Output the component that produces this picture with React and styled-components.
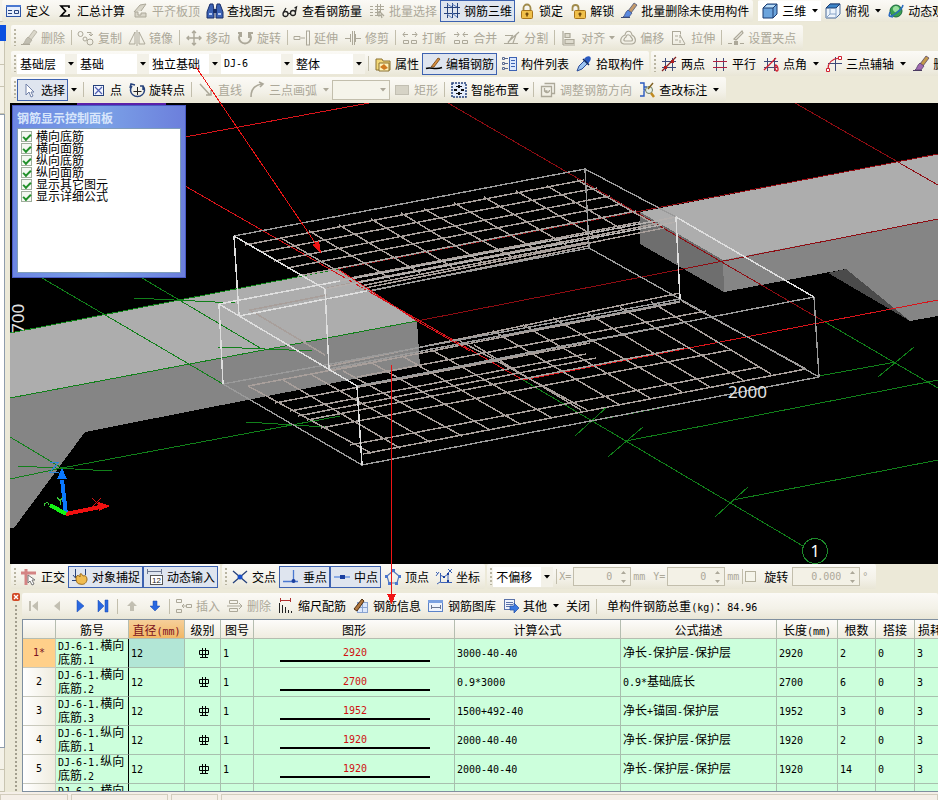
import React from "react";
import styled, { createGlobalStyle, css } from "styled-components";

const CJK = '"Noto Sans CJK SC", "Liberation Sans", sans-serif';
const MONO = '"DejaVu Sans Mono", "Liberation Mono", monospace';

const Global = createGlobalStyle`
  * { box-sizing: border-box; }
  body { margin: 0; background: #ece9d8; font: 12px/16px ${CJK}; color: #000; overflow: hidden; }
  button, input, select { font: inherit; color: inherit; margin: 0; }
`;

/* ---------- layout ---------- */
const Shell = styled.div`
  position: relative;
  display: flex;
  flex-direction: column;
  height: 100vh;
  overflow: hidden;
  background: #ece9d8;
`;
const Body = styled.div`
  flex: 1;
  display: flex;
  min-height: 0;
`;
const Side = styled.aside`
  flex: none;
  width: 10px;
  display: flex;
  flex-direction: column;
  padding-right: 4px;
`;
const SideTitle = styled.div`
  height: 16px;
  margin-top: 3px;
  background: #0b50e0;
`;
const SideTab = styled.div`
  height: ${(p) => p.$h}px;
  margin-right: 1px;
  border: solid #c9c5b2;
  border-width: 0 1px 1px 0;
  background: #f4f2e8;
`;
const SideList = styled.div`
  flex: 1;
  margin-right: 1px;
  border: solid #8f9dac;
  border-width: 1px 1px 1px 0;
  background: #fff;
`;
const Main = styled.main`
  flex: 1;
  min-width: 0;
  display: flex;
  flex-direction: column;
`;
const BarRow = styled.div`
  flex: none;
  display: flex;
  gap: 2px;
  height: 26px;
  padding-left: 1px;
  overflow: hidden;
`;
const TopRow = styled(BarRow)`
  height: 25px;
  margin-left: -10px;
  padding: 0 0 3px 3px;
  gap: 6px;
`;
const Bar = styled.div`
  flex: none;
  display: flex;
  align-items: center;
  height: 25px;
  padding-right: ${(p) => p.$end || 2}px;
  background: linear-gradient(#fbfaf6, #f3f1e8 60%, #e9e6d6);
  border-radius: 2px;
`;
const TopBar = styled(Bar)`
  height: 22px;
  margin-left: -1px;
`;
const Grip = styled.span`
  flex: none;
  width: 2px;
  height: 17px;
  margin: 0 1px 0 3px;
  background: repeating-linear-gradient(#b9b5a2 0 2px, transparent 2px 4px);
`;
const Divider = styled.span`
  flex: none;
  width: 1px;
  height: 15px;
  margin: 0 2px 0 3px;
  background: #c2beac;
`;
const Tool = styled.button`
  flex: none;
  display: flex;
  align-items: center;
  gap: 4px;
  height: 22px;
  padding: 0 2px 0 3px;
  border: 1px solid transparent;
  background: none;
  white-space: nowrap;
  line-height: 18px;
  &:disabled { color: #aca899; }
  ${(p) => p.$on && css`
    border-color: #3d62b0;
    background: #dfe5ef;
  `}
`;
const Drop = styled.span`
  flex: none;
  width: ${(p) => (p.$tight ? 8 : 12)}px;
  display: flex;
  justify-content: center;
  color: ${(p) => (p.$off ? "#aca899" : "#000")};
  svg { width: 6px; height: 4px; }
`;
const NavTool = styled.button`
  flex: none;
  width: 23px;
  height: 22px;
  padding: 0;
  border: 0;
  background: none;
  display: flex;
  align-items: center;
  justify-content: center;
`;
const ComboBox = styled.label`
  flex: none;
  display: grid;
  align-items: center;
  width: ${(p) => p.$w}px;
  height: 20px;
  border: ${(p) => (p.$frame ? "1px solid #c2beac" : "0")};
  background: ${(p) => (p.$frame ? "#f5f4ea" : "#fff")};
  color: ${(p) => (p.$frame ? "#aca899" : "#000")};
  > * { grid-area: 1 / 1; }
`;
const Select = styled.select`
  width: 100%;
  height: 18px;
  padding: 0 0 0 3px;
  border: 0;
  background: none;
  appearance: none;
  line-height: 16px;
  outline: 0;
  ${(p) => p.$latin && css`font: 10px/16px ${MONO};`}
`;
const ComboArrow = styled.span`
  justify-self: end;
  display: flex;
  align-items: center;
  justify-content: center;
  width: 12px;
  height: 100%;
  background: ${(p) => (p.$plain ? "none" : "#f3f1e8")};
  pointer-events: none;
  svg { width: 6px; height: 4px; }
`;
const ViewCombo = styled.div`
  flex: none;
  display: flex;
  align-items: center;
  height: 20px;
  background: #fff;
`;
const Latin = styled.span`
  font: 10px/12px ${MONO};
`;
const Field = styled.label`
  flex: none;
  display: flex;
  align-items: center;
  gap: ${(p) => p.$gap || 2}px;
  margin-left: ${(p) => p.$ml || 0}px;
  color: ${(p) => (p.$dark ? "#000" : "#aca899")};
  font: ${(p) => (p.$dark ? "12px/16px " + CJK : "10px/16px " + MONO)};
`;
const Spin = styled.span`
  display: flex;
  align-items: center;
  width: ${(p) => p.$w}px;
  height: 19px;
  padding-right: 3px;
  border: 1px solid #c2beac;
  background: #f3f1e6;
  svg { flex: none; width: 7px; height: 14px; }
`;
const SpinInput = styled.input`
  flex: 1;
  min-width: 0;
  width: 100%;
  padding: 0 8px 0 0;
  border: 0;
  background: none;
  text-align: right;
  font: 10px/14px ${MONO};
  color: #aca899;
`;
const Check = styled.input`
  appearance: none;
  flex: none;
  width: 11px;
  height: 11px;
  border: 1px solid #b5b19e;
  background: #f5f4ea;
`;

/* ---------- scene ---------- */
const Stage = styled.section`
  position: relative;
  flex: 1;
  min-height: 0;
  background: #000;
  overflow: hidden;
`;
const SceneSvg = styled.svg`
  display: block;
  width: 100%;
  height: 100%;
`;
const Palette = styled.div`
  position: absolute;
  left: 2px;
  top: 2px;
  width: 174px;
  height: 173px;
  display: flex;
  flex-direction: column;
  padding: 0 4px 4px;
  border: 1px solid #4a5ac4;
  background: linear-gradient(90deg, #6c86e2, #7ba2e7 50%, #6c7fdc);
`;
const PaletteTitle = styled.h2`
  flex: none;
  height: 22px;
  margin: 0;
  padding-top: 2px;
  font: bold 12px/20px ${CJK};
  color: #d8e6fb;
  white-space: nowrap;
`;
const PaletteList = styled.div`
  flex: 1;
  padding: 1px 3px;
  border: 1px solid #7f9db9;
  background: #fff;
`;
const CheckRow = styled.label`
  display: flex;
  align-items: center;
  gap: 4px;
  height: 12px;
  line-height: 12px;
  white-space: nowrap;
`;
const Tick = styled.input`
  appearance: none;
  width: 11px;
  height: 11px;
  border: 1px solid #9fae9c;
  background: #f4f8f2;
  display: grid;
  place-items: center;
  &:checked::before {
    content: "";
    width: 6px;
    height: 3px;
    border: solid #21902a;
    border-width: 0 0 2px 2px;
    transform: rotate(-45deg);
  }
`;
const Callouts = styled.svg`
  position: absolute;
  left: 0;
  top: 0;
  width: 938px;
  height: 800px;
  pointer-events: none;
`;

/* ---------- editor ---------- */
const Editor = styled.section`
  flex: none;
  display: flex;
  height: 202px;
  padding-top: 3px;
`;
const EditorEdge = styled.div`
  flex: none;
  width: 12px;
  display: flex;
  flex-direction: column;
  align-items: center;
  gap: 4px;
`;
const CloseBox = styled.button`
  width: 8px;
  height: 8px;
  padding: 0;
  border: 0;
  border-radius: 2px;
  background: #d24a26;
  color: #fff;
  display: flex;
  svg { width: 8px; height: 8px; }
`;
const EdgeDots = styled.span`
  flex: 1;
  width: 2px;
  background: repeating-linear-gradient(#a39f8e 0 2px, transparent 2px 4px);
`;
const EditorMain = styled.div`
  flex: 1;
  min-width: 0;
  display: flex;
  flex-direction: column;
`;
const EditBar = styled(Bar)`
  flex: none;
  height: 26px;
`;
const Total = styled.output`
  margin-left: 8px;
  white-space: nowrap;
`;
const GridBox = styled.div`
  flex: 1;
  min-height: 0;
  overflow: hidden;
  border: solid #7f8f9f;
  border-width: 1px 0 1px 1px;
  background: #fff;
`;
const Grid = styled.table`
  width: 100%;
  min-width: 950px;
  table-layout: fixed;
  border-collapse: separate;
  border-spacing: 0;
`;
const Th = styled.th`
  height: 19px;
  padding: 0;
  border: solid #b5bdb0;
  border-width: 0 1px 1px 0;
  background: ${(p) => (p.$hot ? "linear-gradient(#f6cf9a, #f2b866)" : "linear-gradient(#fdfcfa, #efecdf)")};
  color: ${(p) => (p.$hot ? "#7a1020" : "#000")};
  font-weight: 400;
  line-height: 17px;
  text-align: ${(p) => (p.$left ? "left" : "center")};
  ${(p) => p.$left && css`padding-left: 3px;`}
  white-space: nowrap;
  overflow: hidden;
`;
const Td = styled.td`
  height: 29px;
  padding: 0 0 0 2px;
  border: solid #a8bfae;
  border-width: 0 1px 1px 0;
  background: ${(p) => (p.$hot ? "#b2e6d6" : "#ccffdc")};
  line-height: 12px;
  text-align: ${(p) => (p.$mid ? "center" : "left")};
  overflow: hidden;
  ${(p) => p.$edge && css`border-right-color: #000;`}
  ${(p) => !p.$wrap && css`white-space: nowrap;`}
`;
const RowHead = styled.th`
  padding: 0;
  border: solid #c9c9bd;
  border-width: 0 1px 1px 0;
  background: ${(p) => (p.$hot ? "#ffd08a" : "linear-gradient(90deg, #fff, #efecdf)")};
  color: ${(p) => (p.$hot ? "#7a1020" : "#000")};
  font: 10px/12px ${MONO};
  text-align: center;
`;
const Shape = styled.div`
  width: 150px;
  margin: 0 auto;
  padding-bottom: 1px;
  border-bottom: 2px solid #000;
  color: #d01010;
  text-align: center;
`;
const Status = styled.footer`
  flex: none;
  display: flex;
  gap: 3px;
  height: 8px;
  padding-top: 2px;
  background: #f5efe8;
`;
const StatusCell = styled.span`
  width: ${(p) => p.$w}px;
  border: 1px solid #d3cdbd;
  border-bottom: 0;
  &:last-child { flex: 1; }
`;

/* ---------- icons ---------- */
const IconSvg = styled.svg`
  flex: none;
  width: 16px;
  height: 16px;
  overflow: visible;
`;
const G = "#aca899";
const N = "#26427c";
const L = (d, c = G, w = 1, f = "none") => <path d={d} stroke={c} strokeWidth={w} fill={f} />;
const brush = (c1, c2, c3) => (
  <>
    <path d="M7 8 13 0l3 2-6 8z" fill={c2} stroke={c3} strokeWidth=".7" />
    <path d="M7 7l4 3-3 4H2c2-1 2-5 5-7z" fill={c1} stroke={c3} strokeWidth=".7" />
    <path d="M0 14.500h9" stroke={c3} />
  </>
);
const lock = (open) => (
  <>
    <path d={open ? "M2.500 8V5a3 3 0 0 1 6 0v2" : "M4.500 8V5a3.500 3.500 0 0 1 7 0v3"} fill="none" stroke="#a08a4a" strokeWidth="1.800" />
    <rect x={open ? 4.5 : 2.5} y="7.500" width="11" height="8" rx="1" fill="#f0c04a" stroke="#a8741a" />
    <path d={open ? "M10 9.500v4M8.500 11h3" : "M8 9.500v4M6.500 11h3"} stroke="#6b4308" strokeWidth="1.500" />
  </>
);
const hash = L("M4.500 2v13M11.500 2v13M1 5.500h14M1 11.500h14", "#3d4a78");
const ICONS = {
  define: <><rect x=".5" y="2.500" width="14" height="11" fill="#e6eefc" stroke="#2d55a8" /><path d="M0 2h15v2H0z" fill="#4a78d0" />{L("M2 7.500h4M2 10.500h4M8.500 7.500h4v3h-4z", N)}</>,
  sum: L("M12 5V3H4l4.500 5L4 13h8v-2", "#000", 1.7),
  flat: <>{L("M2 9 8 2l6-1-5 7M3 9v5h11v-4H9v2H6V9z", G, 1, "#d8d5c8")}</>,
  find: <><path d="M3 1h3l1 6v8H0V9zM10 1h3l3 8v6H9V7z" fill="#3c62b4" stroke="#1a2f68" /><path d="M6 6h4v4H6z" fill="#1a2f68" /><path d="M2 11h3M11 11h3" stroke="#b8ccf4" strokeWidth="2" /></>,
  glasses: <>{L("M1 11a2.500 2.500 0 1 0 5 0 2.500 2.500 0 1 0-5 0M8.500 10a2.500 2.500 0 1 0 5 0 2.500 2.500 0 1 0-5 0M6 11l2.500-1M1 10l3-5M13.500 9l1-5-2 1", "#222", 1.3)}</>,
  batch: <>{L("M1 3.500h3M1 6.500h3M1 9.500h3M1 12.500h3M6 3.500h9M6 6.500h9M6 9.500h6M6 12.500h4M8.500 1v12M11.500 1v9")}{L("M10 8l5 5M10 8v5l2-1 1 3", G, 1.3)}</>,
  mesh: <>{L("M0 4.500h16M0 10.500h16M3.500 0v15M8.500 0v15M13.500 0v15", N)}{L("M3 1l5 3M8 10l5 4M3 11l5 4M8 1l5 3", "#5a7ec0")}</>,
  lock: lock(false),
  unlock: lock(true),
  brush: brush("#5c8ae0", "#c49a6a", "#3b4a78"),
  brushRed: brush("#a06ab0", "#c49a4a", "#4a3a60"),
  brushOff: brush("#c2bfb2", "#dad7ca", G),
  cube: <><path d="M1 5l4-4h10v10l-4 4H1z" fill="#6ca4dc" stroke="#1c3c70" /><path d="M2 5l3-3h9l-3 3z" fill="#b8dcf8" /><path d="M1 5h10v10M11 5l4-4" fill="none" stroke="#1c3c70" /></>,
  topview: <><path d="M1 5l4-4h10v10l-4 4H1z" fill="#edf4fb" stroke="#4a6a98" /><path d="M1 5l4-4h10l-4 4z" fill="#3c84c8" stroke="#1c3c70" /><path d="M11 5v10M5 5v6h6M5 11l-4 4" stroke="#88a4c8" fill="none" /></>,
  orbit: <><circle cx="8" cy="8" r="6" fill="#3aa050" stroke="#1c6a40" /><path d="M5 5c2-3 5-2 6 0s-2 3-3 4-4-2-3-4z" fill="#9ae0a0" /><path d="M1 13C4 14 14 7 15 2M1 13l1-4M1 13l4 1" stroke="#2a6ac0" fill="none" strokeWidth="1.500" /></>,
  copy: <>{L("M0 4a2.500 2.500 0 1 0 5 0 2.500 2.500 0 1 0-5 0M9 12a3 3 0 1 0 6 0 3 3 0 1 0-6 0M5 9a2 2 0 1 0 4 0 2 2 0 1 0-4 0M9 2.500h4v3M11 4l2 2 2-2")}</>,
  mirror: L("M6 2v12H0zM10 2v12h6zM8 0v16"),
  move: L("M8 1v14M1 8h14M6 3l2-2 2 2M6 13l2 2 2-2M3 6 1 8l2 2M13 6l2 2-2 2", G, 1.4),
  rotate: L("M4 3a6 6 0 1 0 8 0M12 8V3h4M4 7V3H1", G, 2),
  extend: L("M0 6.500h6v3H0zM7 8h4M12.500 1v14M15.500 1v14M12 1h4M12 15h4"),
  trim: L("M0 8.500h5M11 8.500h5M5.500 4v8M10.500 4v8M7.500 1v14M9.500 1v14"),
  break_: L("M1 4.500h5M10 4.500h5M3 2 1 4.500 3 7M13 2l2 2.500L13 7M1.500 10.500h5v3h-5zM9.500 10.500h5v3h-5z"),
  merge: L("M1 4.500h5M10 4.500h5M4 2l2 2.500L4 7M12 2l-2 2.500L12 7M1.500 10.500h5v3h-5zM9.500 10.500h5v3h-5z"),
  split: L("M1 5.500h8M0 13.500h14M4 12 15 2M9 5l-5 8M9 13l3-8", G, 1.2),
  align: L("M2 1v14M4 3.500h5v4H4zM4 9.500h9v4H4zM2 15h12", G, 1.2, "#dedbce"),
  offset: L("M5 5c1-5 6-5 7 0 4 2 5 8 0 9H4C-1 13 0 7 5 5zM6 7c0-3 4-3 5 0 2 2 2 4 0 4H5c-2 0-1-3 1-4z", G, 1.2),
  stretch: L("M1.500 1.500h8v3M1.500 1v13M1 14.500h13M4 6h3M4 10h3M9 5l5 9M9 5v3M9 10v3", G, 1),
  grips: <>{L("M0 13.500h4M12 13.500h4M6 9 14 1l1 2-7 7z", G, 1.2)}<path d="M6 11h4v4H6z" fill={G} /></>,
  prop: <><path d="M1 3h6l1 2h7v9H1z" fill="#f2d878" stroke="#8a7030" /><path d="M4 7h10v8H4z" fill="#fff3b8" stroke="#8a7030" /><path d="M5 11l4-3 4 4-4 2z" fill="#d07a20" /></>,
  editbar: <><path d="M0 12.500c5-2 9 2 16-1" stroke="#000" strokeWidth="1.500" fill="none" /><path d="M5 11 12 2l2 1-6 8z" fill="#d89040" stroke="#704010" strokeWidth=".8" /></>,
  list: <>{L("M1.500 1.500h2v2h-2zM1.500 6.500h2v2h-2zM1.500 11.500h2v2h-2zM4 2.500h3M4 7.500h3M4 12.500h3", "#5a6a90")}<rect x="8.500" y="1.500" width="7" height="13" fill="#dce8fc" stroke="#3c62b4" />{L("M10 4.500h4M10 7.500h4M10 10.500h4", "#3c62b4")}</>,
  pick: <><path d="M1 15l2-5 6-6 3 3-6 6z" fill="#9cc4f0" stroke="#2a4a98" /><path d="M8 3l2-2c4-2 6 1 4 4l-2 3z" fill="#2a5ac0" /><path d="M7 3l6 6" stroke="#122a60" strokeWidth="1.500" /></>,
  two: <>{hash}{L("M1 15 15 1", "#802020", 1.2)}<path d="M3 10h3v3H3zM10 4h3v3h-3z" fill="#b02020" /></>,
  parallel: <>{hash}{L("M1 5.500h14M1 11.500h14", "#b02040")}</>,
  angle: <>{hash}{L("M1 14 13 2M12 9c3 0 4 6 2 6s-3-5-1-6", "#d02030", 1.3)}</>,
  aux: <>{L("M9.500 1v14M2 7.500h14", "#3d4a78")}{L("M2 13c0-7 4-10 11-11", "#d02030", 1.2)}<path d="M.5 12.500h3v3h-3zM12.500 .5h3v3h-3z" fill="#fff" stroke="#d02030" /></>,
  cursor: <path d="M5 2v11l3-3 2 5 2-1-2-4h3z" fill="#fff" stroke="#7080a8" />,
  point: <><rect x="3.500" y="3.500" width="10" height="10" fill="#f4f6ff" stroke={N} />{L("M5 5l7 7M12 5l-7 7", "#5060b0", 1.2)}</>,
  rotpt: <>{L("M3 4a7 6.500 0 1 0 11 0M1 6l1-4 4 1M14 8V4h-3", N, 1.5)}{L("M8.500 5v8M4.500 9.500h8", "#222")}</>,
  line: L("M2 2l10 11M8 13h5V8", G, 1.5),
  arc: L("M2 15C2 7 6 3 13 2M10 0l4 2-3 3", G, 1.6),
  rect: <rect x="1.500" y="3.500" width="13" height="9" fill="#d6d3c6" stroke="#c2bfb2" />,
  smart: <><rect x="1" y="1" width="14" height="14" fill="#e4ecfb" stroke={N} strokeDasharray="2 1" strokeWidth="1.500" />{L("M8 3v3M8 10v3M3 8h3M10 8h3", "#111", 2)}{L("M5 4.500h6M5 11.500h6", "#111", 1)}</>,
  adjust: L("M1.500 4.500h10v10h-10zM4.500 1.500h10v10h-3M4.500 8a2.500 2.500 0 1 0 5 0M4.500 6v3h3", G, 1.3),
  mark: <>{L("M1 1h4v4h3M5 5v3h2M1 14h4V9", "#2a5ac0", 1.4)}<circle cx="10" cy="8" r="3.500" fill="#e8f0e8" stroke="#6a7a60" /><path d="M12 11l3 4" stroke="#c08a20" strokeWidth="2.500" />{L("M14 1 9 7", "#806020", 1.4)}</>,
  ortho: <><path d="M0 4h15M5 0v16" stroke="#d48484" strokeWidth="3" /><path d="M7 6v8l2-2 2 4 2-1-2-4h3z" fill="#fff" stroke="#777" /></>,
  snap: <><path d="M3.500 0v9M1 6l2.500 3L6 6M0 11.500h6M13.500 0v6" stroke={N} fill="none" /><path d="M4 9c0-3 3-3 4-1V5c2-1 2 1 3 2 3-1 4 1 4 4-1 4-4 5-7 4-3 0-4-3-4-6z" fill="#f0bc50" stroke="#9a6a18" /></>,
  dyn: <><path d="M0 2.500h15M.5 0v5M14.500 0v5" stroke="#6a7690" /><rect x="3.500" y="6.500" width="12" height="9" fill="#fff" stroke="#555" /><text x="5" y="14" fontSize="8" fontFamily="Liberation Sans" fill="#222">12</text></>,
  cross: <>{L("M1 2l14 12M15 2 1 14", N, 1.3)}<circle cx="8" cy="8" r="2.500" fill="#1a50c8" /></>,
  perp: <>{L("M0 12.500h15M10.500 1v11", "#4a78d0", 1.3)}<circle cx="10.500" cy="12" r="2" fill="#1a3fa0" /></>,
  mid: <>{L("M0 8h16", "#5a8ae0", 1.3)}<path d="M6 6h5v4H6z" fill="#1a3fa0" /></>,
  vertex: <>{L("M8 2l6 5-2 7H4L2 7z", "#5a7ab8", 1.2)}<path d="M7 0h3v3H7zM0 6h3v3H0zM13 6h3v3h-3zM3 13h3v3H3zM10 13h3v3h-3z" fill="#4a78d0" /></>,
  coord: <>{L("M4.500 4v9.500H16M4 13l-3 2M4 6l4 2 4-3v7M0 3l2 2M3 3 0 7M12 0l4 4M16 0l-4 4", "#3c62b4", 1)}<path d="M7 7h2v2H7zM11 4h2v2h-2zM11 11h2v2h-2z" fill="#1a3fa0" /></>,
  first: <path d="M3 3h2v10H3zM12 3v10L6 8z" fill="#c2bfb2" />,
  prev: <path d="M11 3v10L5 8z" fill="#c2bfb2" />,
  next: <path d="M5 2v12l7-6z" fill="#2a68e0" stroke="#1a4ab0" strokeWidth=".5" />,
  last: <path d="M3 2v12l6-6zM10 2h3v12h-3z" fill="#2a68e0" stroke="#1a4ab0" strokeWidth=".5" />,
  up: <path d="M8 3l5 5h-3v5H6V8H3z" fill="#c2bfb2" />,
  down: <path d="M8 13l5-5h-3V3H6v5H3z" fill="#2a68e0" stroke="#1a4ab0" strokeWidth=".5" />,
  insert: L("M.5 1.500h5v3h-5zM.5 11.500h5v3h-5zM6 8h4M8 6 6 8l2 2M10.500 6.500h5v3h-5z", G),
  del: L("M2.500 2.500h8v3h-8zM2.500 10.500h8v3h-8zM0 8h14M12 5l3 3-3 3", G),
  scale: <>{L("M2 2.500h10M2.500 0v4M12.500 0v4", "#b03030")}{L("M1.500 5v10M4.500 7v8M7.500 9v6M10.500 12v3M13.500 13v2", "#222")}</>,
  info: <><rect x="4.500" y="4.500" width="10" height="10" fill="#dce8fc" stroke="#8aa4d0" />{L("M4 9.500h11M9.500 4v11", "#8aa4d0")}<path d="M1 11 9 1l2 2-7 10z" fill="#b07840" stroke="#503010" /></>,
  lib: <><rect x=".5" y="2.500" width="14" height="11" fill="#eef3fc" stroke="#5a82c8" /><path d="M0 2h15v3H0z" fill="#7aa0e0" />{L("M3.500 7v4M3 9.500h9M12.500 7v4", "#6a7690")}</>,
  other: <><rect x="1.500" y="1.500" width="10" height="10" fill="#eef3fc" stroke="#5a72a8" />{L("M3 4.500h7M3 6.500h7M3 8.500h4", "#5a72a8")}<path d="M7 8h4V5l5 5-5 5v-3H7z" fill="#3a78e0" stroke="#1c4aa0" strokeWidth=".7" /></>,
};
const Icon = ({ name }) => <IconSvg viewBox="0 0 16 16" aria-hidden="true">{ICONS[name]}</IconSvg>;
const Arrow = () => <svg viewBox="0 0 6 4" aria-hidden="true"><path d="M0 0h6L3 3.500z" fill="currentColor" /></svg>;

/* ---------- pieces ---------- */
const T = ({ children }) =>
  String(children)
    .split(/([\x20-\x7e]+)/)
    .filter(Boolean)
    .map((s, i) => (/^[\x20-\x7e]/.test(s) ? <Latin key={i}>{s}</Latin> : s));

const Tools = ({ items }) =>
  items.map((it, i) => {
    if (it === "|") return <Divider key={i} />;
    const [icon, text, flags = ""] = it;
    const off = flags.includes("x");
    return (
      <React.Fragment key={i}>
        <Tool type="button" disabled={off} $on={flags.includes("o")}>
          {icon && <Icon name={icon} />}
          {text}
        </Tool>
        {/[vt]/.test(flags) && <Drop $off={off} $tight={flags.includes("t")}><Arrow /></Drop>}
      </React.Fragment>
    );
  });

const Combo = ({ value, label, w, latin, frame }) => (
  <ComboBox $w={w} $frame={frame}>
    <Select aria-label={label} defaultValue={value} disabled={frame} $latin={latin}>
      <option>{value}</option>
    </Select>
    <ComboArrow $plain={frame}><Arrow /></ComboArrow>
  </ComboBox>
);
const Spinner = ({ value, w, label }) => (
  <Spin $w={w}>
    <SpinInput defaultValue={value} disabled aria-label={label} />
    <svg viewBox="0 0 7 14"><path d="M1 4l2.500-3L6 4zM1 10l2.500 3L6 10z" fill="#aca899" /></svg>
  </Spin>
);

/* ---------- scene data ---------- */
const lines = (a) => a.map(([x1, y1, x2, y2]) => `M${x1} ${y1}L${x2} ${y2}`).join("");
const upperLong = [[245, 245, 584, 180], [262, 252, 597, 188], [274, 261, 610, 196], [287, 268, 622, 204], [298, 276, 636, 211], [345, 279, 640, 222], [327, 288, 660, 223], [355, 290, 664, 228], [360, 286, 588, 242], [370, 291, 588, 246]];
const upperCross = [[248, 244, 325, 289], [281, 238, 358, 283], [309, 231, 390, 278], [339, 225, 420, 273], [371, 219, 452, 267], [401, 213, 482, 262], [424, 209, 512, 257], [454, 203, 537, 250], [484, 197, 566, 245], [516, 191, 598, 238], [547, 186, 625, 231], [577, 180, 658, 226]];
const lowerLong = [[275, 403, 590, 343], [290, 411, 586, 354], [298, 416, 596, 358], [307, 420, 684, 348], [321, 428, 730, 350], [350, 445, 760, 367], [363, 454, 806, 369], [248, 386, 390, 359], [330, 366, 680, 293], [330, 371, 680, 302], [360, 386, 683, 323], [357, 377, 706, 311]];
const lowerCross = [[248, 386, 371, 453], [283, 380, 400, 448], [312, 375, 430, 442], [343, 371, 462, 436], [372, 363, 490, 430], [402, 356, 520, 424], [430, 349, 552, 418], [460, 341, 587, 410], [474, 345, 581, 410], [493, 331, 620, 405], [523, 325, 650, 398], [553, 318, 682, 392], [587, 313, 710, 387], [620, 307, 743, 380], [651, 302, 771, 374], [682, 301, 806, 369]];
const boxFar = [[234, 236, 585, 169], [585, 169, 676, 217], [585, 169, 589, 248], [589, 248, 680, 299], [239, 316, 589, 248], [680, 299, 819, 377], [362, 465, 819, 377], [357, 386, 814, 297], [814, 297, 819, 377], [223, 384, 362, 465], [223, 384, 680, 299], [329, 369, 680, 301]];
const boxNear = [[234, 236, 325, 289], [234, 236, 239, 316], [325, 289, 329, 369], [219, 304, 357, 386], [219, 304, 223, 384], [357, 386, 362, 465], [676, 217, 680, 299], [676, 217, 814, 297], [219, 304, 340, 281], [239, 316, 367, 291]];
const boxTop = [[325, 289, 676, 222], [340, 281, 676, 217]];
const green = [[42, 278, 223, 384], [142, 278, 262, 349], [134, 298, 235, 303], [10, 398, 417, 321], [10, 333, 338, 269], [218, 347, 312, 351], [246, 422, 325, 427], [10, 437, 62, 468], [10, 479, 62, 468], [62, 468, 340, 416], [18, 466, 112, 471], [523, 380, 803, 546], [592, 421, 660, 408], [819, 376, 896, 362], [626, 441, 938, 380], [733, 500, 938, 460], [825, 322, 938, 388], [575, 436, 608, 406], [608, 457, 643, 427], [715, 517, 748, 487], [878, 377, 914, 347]];

const Scene = () => (
  <SceneSvg viewBox="10 103 928 461" preserveAspectRatio="xMinYMin slice" shapeRendering="crispEdges" fill="none" role="img" aria-label="钢筋三维">
    <path d="M77 104h89" stroke="#5a20a8" strokeWidth="3" />
    <path d="M10 333 338 269 417 321 10 398z" fill="#adadad" />
    <path d="M10 398 417 321 420 366 85 432 14 528H10z" fill="#858585" />
    <path d="M640 212 938 154V219L723 260z" fill="#adadad" />
    <path d="M723 260 938 219V316L910 321 846 269 724 292z" fill="#858585" />
    <path d="M640 212 723 260 724 292 640 244z" fill="#6e6e6e" />
    <path d="M828 273 846 269 910 321z" fill="#4b4b4b" />
    <path d={lines([[448, 103, 825, 322], [795, 103, 938, 185], [338, 269, 938, 154], [417, 321, 938, 219]])} stroke="#8e0c12" />
    <path d={lines(green)} stroke="#11801a" />
    <path d={lines([[185, 137, 369, 103], [185, 186, 523, 380], [523, 380, 938, 300]])} stroke="#d8141a" />
    <g stroke="#a89f9b" strokeWidth="1.500">
      <path d={lines(upperLong)} /><path d={lines(upperCross)} />
      <path d={lines(lowerLong)} /><path d={lines(lowerCross)} />
      <path d="M327 295 250 310 325 355" />
    </g>
    <path d={lines(boxFar)} stroke="#9a9a9a" strokeWidth="1.400" />
    <path d={lines(boxTop)} stroke="#b4b0ae" strokeWidth="1.500" />
    <path d={lines(boxNear)} stroke="#dedede" strokeWidth="1.500" />
    <path d="M338 269 417 321 470 351" stroke="#d8141a" />
    <g fontFamily="Noto Sans, sans-serif" fill="#e4e4e4" fontSize="17">
      <text x="728" y="398">2000</text>
      <text transform="translate(24 333) rotate(-90)">700</text>
      <text x="815" y="557" fontSize="16" textAnchor="middle" fill="#fff">1</text>
    </g>
    <circle cx="815" cy="551" r="12.500" stroke="#1c8a2a" />
    <path d="M66 514 62 480" stroke="#0a78ff" strokeWidth="4" />
    <path d="M62 468 57 479h10z" fill="#0a78ff" />
    <path d="M50 462h9l-9 10h9" stroke="#2f86d8" />
    <path d="M66 514 100 507" stroke="#f01010" strokeWidth="4" />
    <path d="M98 502 110 506 99 511z" fill="#f01010" />
    <path d="M92 498l9 9M101 498l-9 9" stroke="#d81414" />
    <path d="M66 514 50 505" stroke="#14f014" strokeWidth="4" />
    <path d="M44 506c0-4 5-4 5-1M57 497l3 4 3-4M60 501v4" stroke="#38c838" />
  </SceneSvg>
);

const CHECKS = ["横向底筋", "横向面筋", "纵向底筋", "纵向面筋", "显示其它图元", "显示详细公式"];
const COLS = [33, 73, 56, 36, 33, 201, 166, 156, 61, 38, 39, 58];
const HEADS = ["", "筋号", "直径(mm)", "级别", "图号", "图形", "计算公式", "公式描述", "长度(mm)", "根数", "搭接", "损耗(%)"];
const ROWS = [
  ["1*", "横向", "1", "2920", "3000-40-40", "净长-保护层-保护层", "2"],
  ["2", "横向", "2", "2700", "0.9*3000", "0.9*基础底长", "6"],
  ["3", "横向", "3", "1952", "1500+492-40", "净长+锚固-保护层", "3"],
  ["4", "纵向", "1", "1920", "2000-40-40", "净长-保护层-保护层", "2"],
  ["5", "纵向", "2", "1920", "2000-40-40", "净长-保护层-保护层", "14"],
  ["6", "横向", "1", "1920", "2000-40-40", "净长-保护层-保护层", "2"],
];
const GradeSvg = styled.svg`
  display: block;
  width: 10px;
  height: 11px;
  margin: 0 auto;
`;

export default function App() {
  return (
    <Shell>
      <Global />
      <Body>
        <Side>
          <SideTab $h={22} />
          <SideTitle />
          <SideTab $h={24} />
          <SideTab $h={22} />
          <SideTab $h={27} />
          <SideList />
          <SideTab $h={22} />
          <SideTab $h={22} />
        </Side>
        <Main>
          <TopRow>
            <TopBar $end={1}>
              <Tools items={[["define", "定义"], ["sum", "汇总计算"], ["flat", "平齐板顶", "x"], ["find", "查找图元"], ["glasses", "查看钢筋量"], ["batch", "批量选择", "x"], ["mesh", "钢筋三维", "o"], ["lock", "锁定"], ["unlock", "解锁"], ["brush", "批量删除未使用构件"]]} />
            </TopBar>
            <TopBar>
              <ViewCombo><Tools items={[["cube", "三维", "v"]]} /></ViewCombo>
              <Tools items={[["topview", "俯视", "v"], ["orbit", "动态观察"]]} />
            </TopBar>
          </TopRow>
          <BarRow>
            <Bar $end={4}>
              <Grip />
              <Tools items={[["brushOff", "删除", "x"], "|", ["copy", "复制", "x"], ["mirror", "镜像", "x"], "|", ["move", "移动", "x"], ["rotate", "旋转", "x"], "|", ["extend", "延伸", "x"], ["trim", "修剪", "x"], "|", ["break_", "打断", "x"], ["merge", "合并", "x"], ["split", "分割", "x"], "|", ["align", "对齐", "xt"], ["offset", "偏移", "x"], ["stretch", "拉伸", "x"], "|", ["grips", "设置夹点", "x"]]} />
            </Bar>
          </BarRow>
          <BarRow>
            <Bar>
              <Grip />
              <Combo label="楼层" value="基础层" w={60} />
              <Combo label="构件类型" value="基础" w={72} />
              <Combo label="构件" value="独立基础" w={72} />
              <Combo label="名称" value="DJ-6" w={72} latin />
              <Combo label="单元" value="整体" w={72} />
              <Divider />
              <Tools items={[["prop", "属性"], ["editbar", "编辑钢筋", "o"], ["list", "构件列表"], ["pick", "拾取构件"]]} />
            </Bar>
            <Bar>
              <Grip />
              <Tools items={[["two", "两点"], ["parallel", "平行"], ["angle", "点角", "v"], ["aux", "三点辅轴", "v"], ["brushRed", "删除辅轴"]]} />
            </Bar>
          </BarRow>
          <BarRow>
            <Bar $end={4}>
              <Grip />
              <Tools items={[["cursor", "选择", "ov"], "|", ["point", "点"], ["rotpt", "旋转点"], "|", ["line", "直线", "x"], ["arc", "三点画弧", "xv"]]} />
              <Combo label="画弧方式" value="" w={58} frame />
              <Tools items={[["rect", "矩形", "x"], "|", ["smart", "智能布置", "t"], "|", ["adjust", "调整钢筋方向", "x"], ["mark", "查改标注", "v"]]} />
            </Bar>
          </BarRow>
          <Stage>
            <Scene />
            <Palette>
              <PaletteTitle>钢筋显示控制面板</PaletteTitle>
              <PaletteList>
                {CHECKS.map((c) => (
                  <CheckRow key={c}><Tick type="checkbox" defaultChecked />{c}</CheckRow>
                ))}
              </PaletteList>
            </Palette>
          </Stage>
          <BarRow>
            <Bar>
              <Grip />
              <Tools items={[["ortho", "正交"], ["snap", "对象捕捉", "o"], ["dyn", "动态输入", "o"]]} />
            </Bar>
            <Bar>
              <Grip />
              <Tools items={[["cross", "交点"], ["perp", "垂点", "o"], ["mid", "中点", "o"], ["vertex", "顶点"], ["coord", "坐标"]]} />
            </Bar>
            <Bar $end={8}>
              <Grip />
              <Combo label="偏移方式" value="不偏移" w={60} />
              <Divider />
              <Field>X=<Spinner label="X" value="0" w={58} />mm</Field>
              <Field $ml={8}>Y=<Spinner label="Y" value="0" w={58} />mm</Field>
              <Divider />
              <Field $dark $gap={8}><Check type="checkbox" />旋转</Field>
              <Field $ml={4}><Spinner label="旋转角度" value="0.000" w={68} />°</Field>
            </Bar>
          </BarRow>
          <Editor>
            <EditorEdge>
              <CloseBox type="button" aria-label="关闭面板"><svg viewBox="0 0 8 8"><path d="M2 2l4 4M6 2 2 6" stroke="#fff" strokeWidth="1.400" /></svg></CloseBox>
              <EdgeDots />
            </EditorEdge>
            <EditorMain>
              <EditBar>
                <NavTool type="button" aria-label="第一条" disabled><Icon name="first" /></NavTool>
                <NavTool type="button" aria-label="上一条" disabled><Icon name="prev" /></NavTool>
                <NavTool type="button" aria-label="下一条"><Icon name="next" /></NavTool>
                <NavTool type="button" aria-label="最后一条"><Icon name="last" /></NavTool>
                <Divider />
                <NavTool type="button" aria-label="上移" disabled><Icon name="up" /></NavTool>
                <NavTool type="button" aria-label="下移"><Icon name="down" /></NavTool>
                <Divider />
                <Tools items={[["insert", "插入", "x"], ["del", "删除", "x"], ["scale", "缩尺配筋"], ["info", "钢筋信息"], ["lib", "钢筋图库"], ["other", "其他", "v"], [null, "关闭"], "|"]} />
                <Total><T>单构件钢筋总重(kg)</T>：<T>84.96</T></Total>
              </EditBar>
              <GridBox>
                <Grid>
                  <colgroup>{COLS.map((w, i) => <col key={i} width={i === COLS.length - 1 ? undefined : w} />)}</colgroup>
                  <thead>
                    <tr>{HEADS.map((h, i) => <Th key={i} scope="col" $hot={i === 2} $left={i === 11}><T>{h}</T></Th>)}</tr>
                  </thead>
                  <tbody>
                    {ROWS.map((r, i) => (
                      <tr key={i}>
                        <RowHead scope="row" $hot={i === 0}>{r[0]}</RowHead>
                        <Td $wrap $edge><T>{i === 5 ? "DJ-6-2." : "DJ-6-1."}</T>{r[1]}<br /><T>{"底筋." + r[2]}</T></Td>
                        <Td $hot={i === 0}><T>12</T></Td>
                        <Td $mid>
                          <GradeSvg viewBox="0 0 10 11" role="img" aria-label="三级钢"><path d="M.5 2.500h9v4h-9zM3.500 0v9M6.500 0v9M1 9.500h8" fill="none" stroke="#000" /></GradeSvg>
                        </Td>
                        <Td><T>1</T></Td>
                        <Td><Shape><T>{r[3]}</T></Shape></Td>
                        <Td><T>{r[4]}</T></Td>
                        <Td><T>{r[5]}</T></Td>
                        <Td><T>{r[3]}</T></Td>
                        <Td><T>{r[6]}</T></Td>
                        <Td><T>0</T></Td>
                        <Td><T>3</T></Td>
                      </tr>
                    ))}
                  </tbody>
                </Grid>
              </GridBox>
            </EditorMain>
          </Editor>
        </Main>
      </Body>
      <Status><StatusCell $w={68} /><StatusCell $w={97} /><StatusCell $w={47} /><StatusCell /></Status>
      <Callouts viewBox="0 0 938 800" shapeRendering="crispEdges" aria-hidden="true">
        <path d="M196 67 318 247M391.500 365V596" stroke="#f01414" fill="none" />
        <path d="M321 253 312 245 319 241zM391.500 604 387 594h9z" fill="#f01414" />
      </Callouts>
    </Shell>
  );
}
